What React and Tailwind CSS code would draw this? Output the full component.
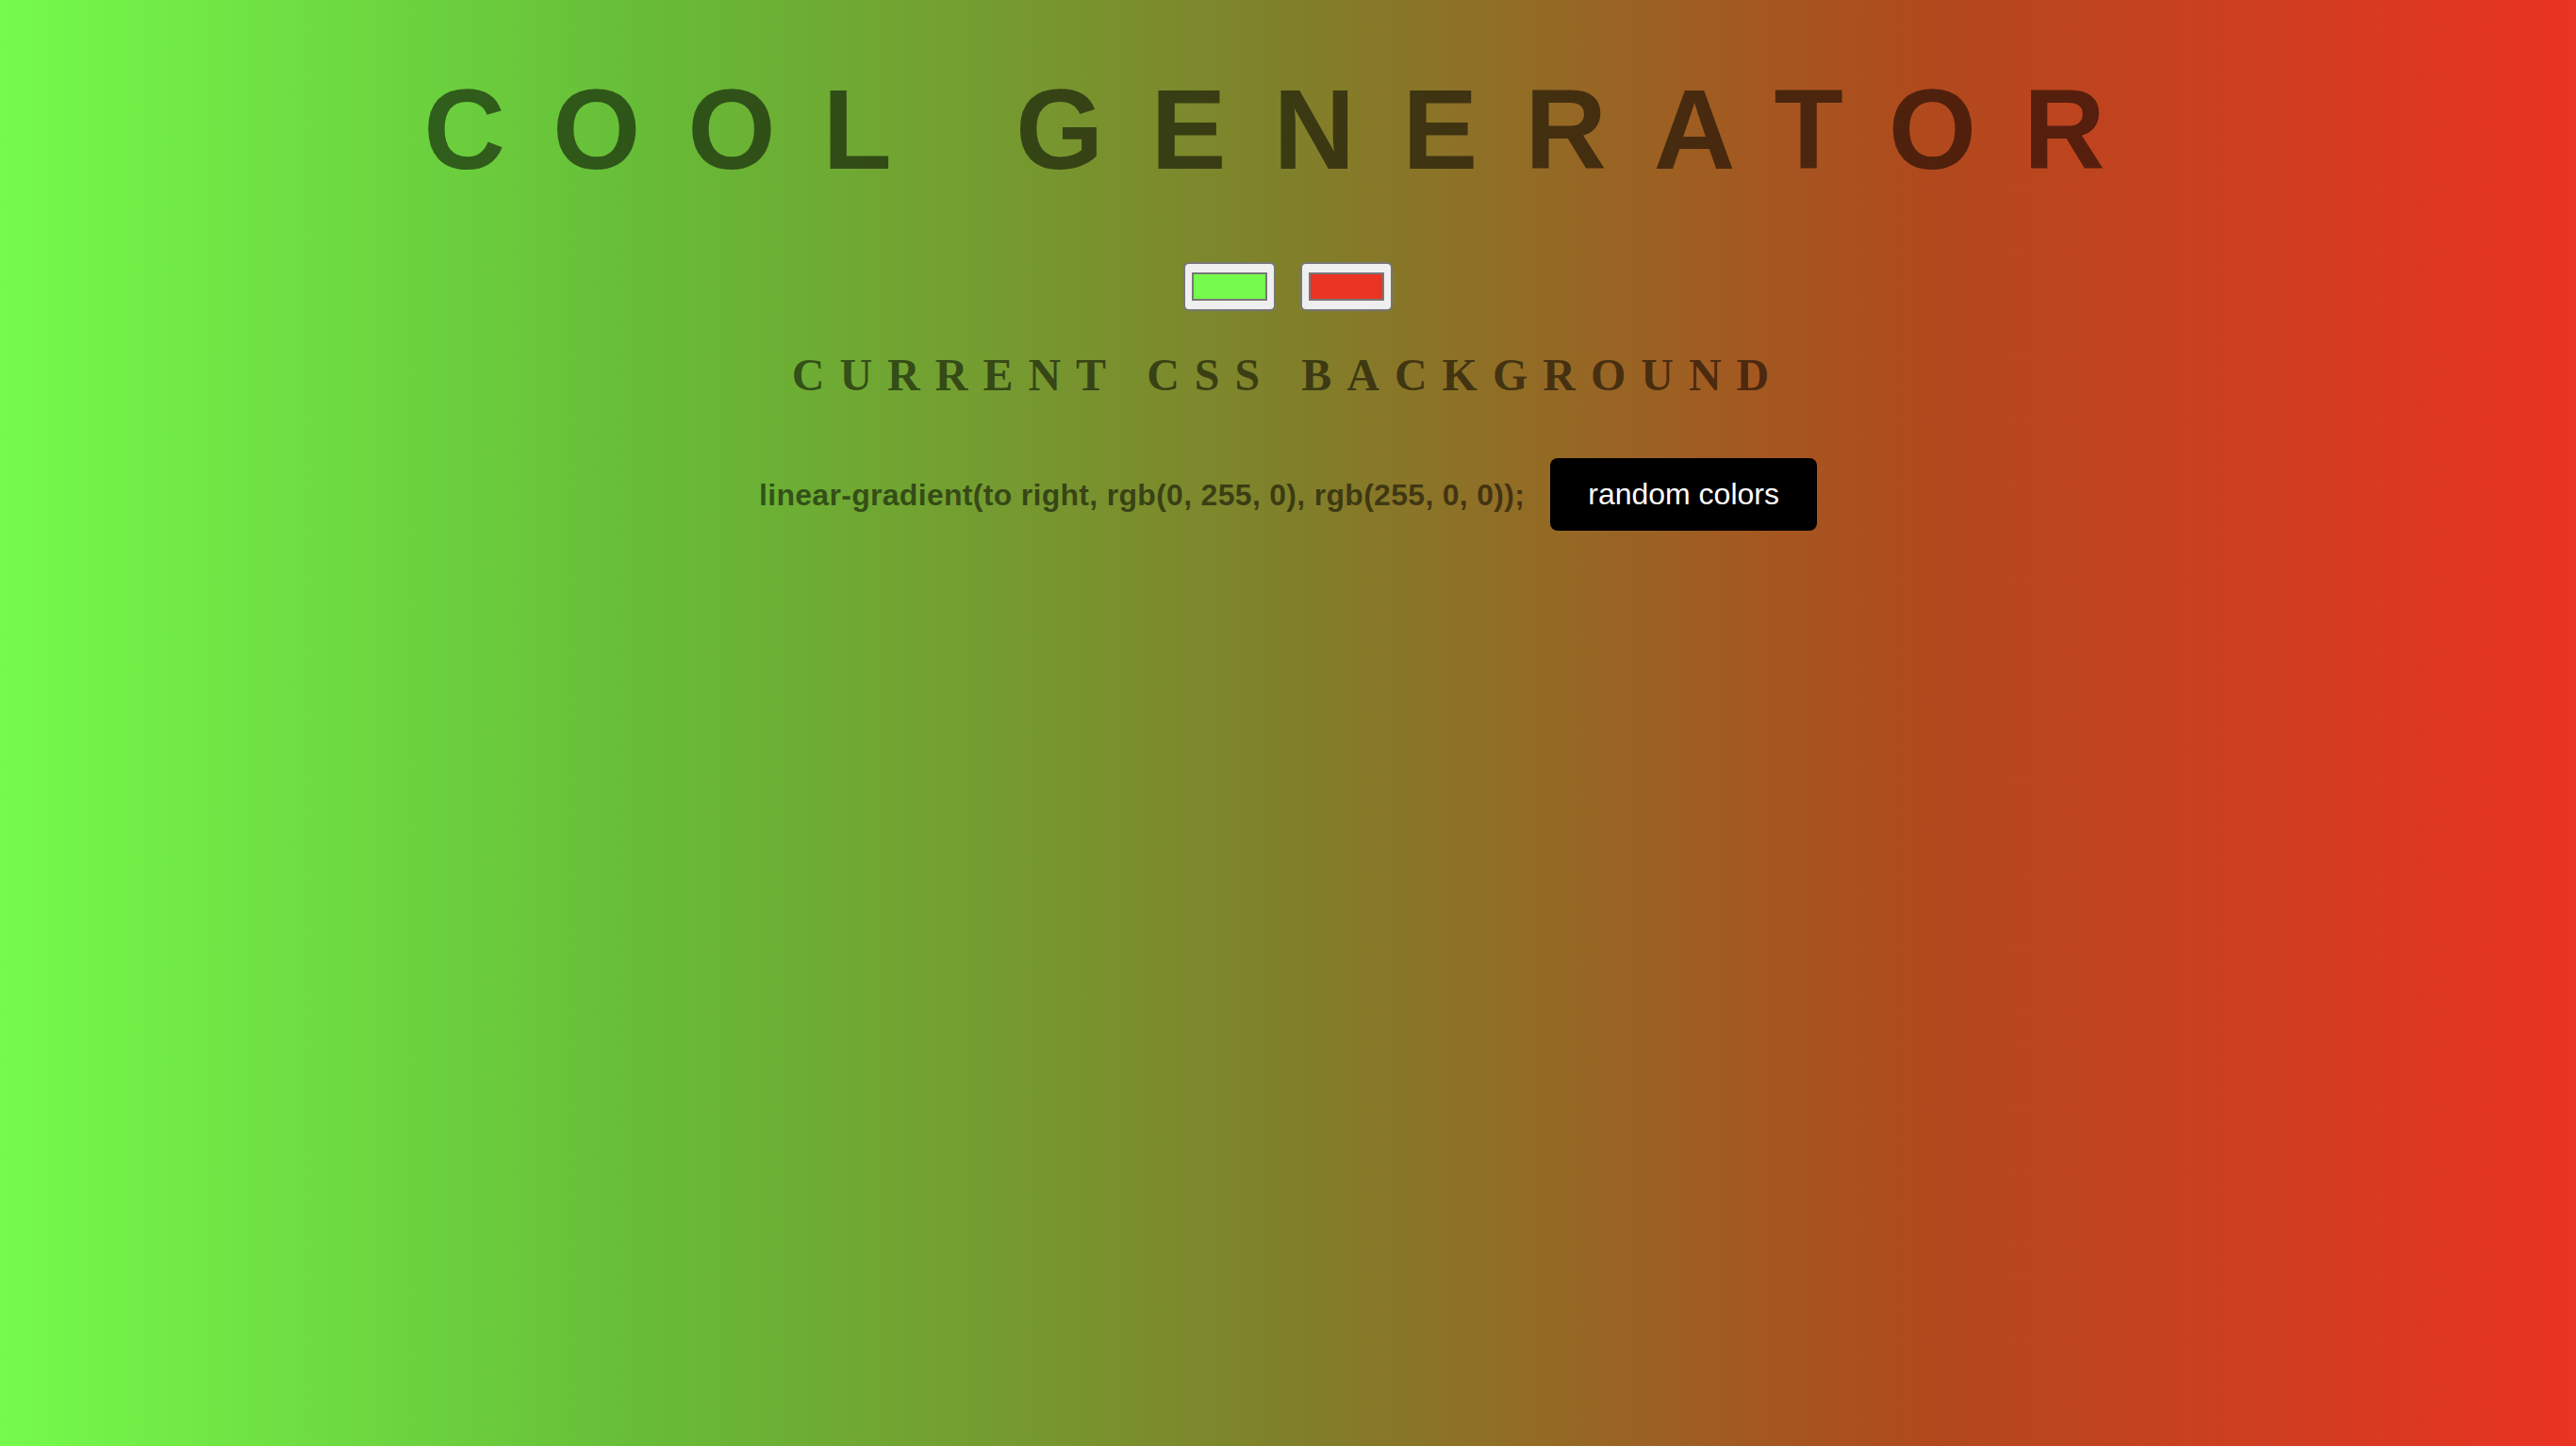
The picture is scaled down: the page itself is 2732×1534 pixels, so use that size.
export default function App() {
  return (
    <div className="min-h-[1534px] w-full bg-[linear-gradient(to_right,#75fb4c_0%,#67bc37_25%,#80802a_50%,#b1491d_75%,#ea3323_100%)] flex flex-col items-center">
      <h1 className="mt-[77px] font-['Liberation_Sans',Arial,sans-serif] font-bold text-[120px] leading-none tracking-[50px] text-[rgba(0,0,0,0.55)] whitespace-pre">
        COOL GENERATOR
      </h1>
      <div className="mt-[81px] flex gap-[26px]">
        <div className="w-[98px] h-[52px] bg-[#efefef] border-2 border-[#767676] rounded-[6px] px-[7px] py-[9px]">
          <div className="w-full h-full border-2 border-[#777777] bg-[#75fb4c]" />
        </div>
        <div className="w-[98px] h-[52px] bg-[#efefef] border-2 border-[#767676] rounded-[6px] px-[7px] py-[9px]">
          <div className="w-full h-full border-2 border-[#777777] bg-[#ea3323]" />
        </div>
      </div>
      <h2 className="mt-[44px] font-['Liberation_Serif','Times_New_Roman',serif] font-bold text-[48px] leading-none tracking-[16px] text-[rgba(0,0,0,0.55)]">
        CURRENT CSS BACKGROUND
      </h2>
      <div className="mt-[64px] flex items-center gap-[27px] font-['Liberation_Sans',Arial,sans-serif]">
        <span className="font-bold text-[32px] leading-none tracking-[0.3px] text-[rgba(0,0,0,0.55)]">
          linear-gradient(to right, rgb(0, 255, 0), rgb(255, 0, 0));
        </span>
        <button className="bg-black text-white text-[32px] leading-[37px] px-[40px] py-[20px] rounded-[8px]">
          random colors
        </button>
      </div>
    </div>
  );
}
